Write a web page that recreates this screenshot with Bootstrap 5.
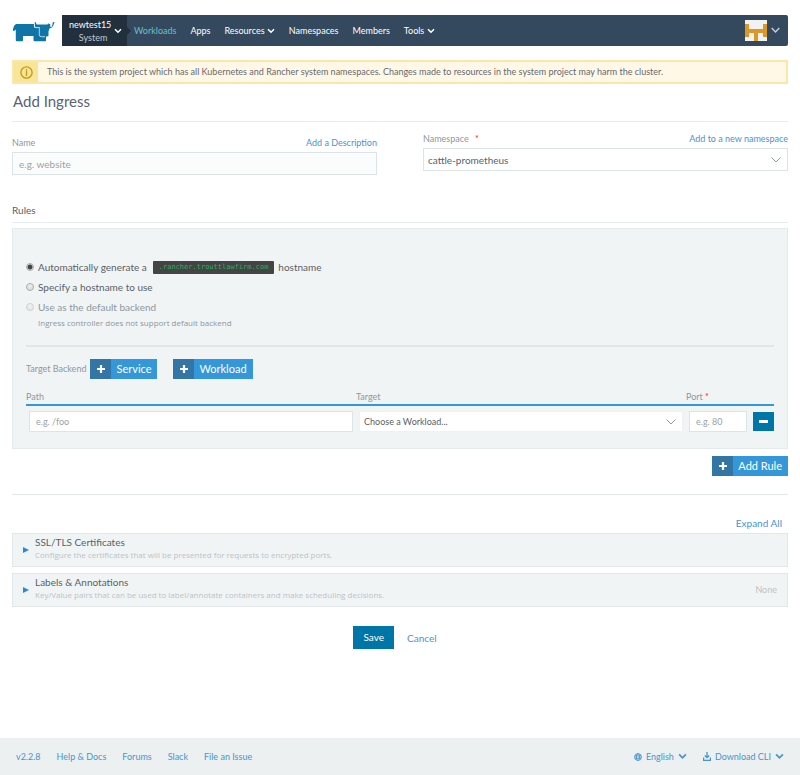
<!DOCTYPE html>
<html lang="en">
<head>
<meta charset="utf-8">
<meta name="viewport" content="width=device-width, initial-scale=1">
<title>Add Ingress</title>
<link href="https://cdn.jsdelivr.net/npm/bootstrap@5.3.0/dist/css/bootstrap.min.css" rel="stylesheet">
<style>
body{font-family:Lato,"Open Sans",sans-serif;font-size:9px;line-height:14px;color:#5a5f66;background:#fff}
a{color:#4a93d2;text-decoration:none}
.page-pad{padding-left:12px;padding-right:12px}
.top-row{padding-top:15px}
.logo{width:50px;height:31px;flex:none}
.top-bar{background:#34495e;border-radius:0 2px 2px 0;height:31px}
.project-btn{position:relative;background:#222f3c;color:#fff;width:65px;height:31px;border:0;padding:0 5px 0 7px;font-size:9px;line-height:13px}
.project-btn::after{content:"";position:absolute;left:100%;top:12px;border:4px solid transparent;border-left-color:#222f3c}
.project-btn .sub{color:#c3c9ce;padding-right:4px}
.top-nav{gap:14px;padding-left:7px}
.top-nav a{color:#fff}
.top-nav a.current{color:#63c2cf}
.alert-bar{margin-top:14px;border:2px solid #fbe7a8;background:#fff8e6;color:#666a70;border-radius:0;height:24px}
.alert-icon{width:24px;background:#f9e59a}
.alert-text{padding-left:9px}
.title-line{font-size:15px;line-height:20px;font-weight:400;color:#5a6370;margin:7px 0 0;padding:0 1px 10px;border-bottom:1px solid #e8eeef}
.lbl{color:#8f979e;font-size:9px;line-height:12px}
.lbl-row{margin-bottom:3px}
.lnk{font-size:9px;line-height:12px}
.req{color:#f22;font-size:9px}
.form-row{--bs-gutter-x:46px;margin-top:11px}
.form-control,.form-select{border:1px solid #dce5e6;border-radius:0;color:#5a5f66;font-size:10px;line-height:14px;padding:0 6px;box-shadow:none}
.form-control::placeholder{color:#9ba3a8}
.form-select{background:#fff url("data:image/svg+xml,%3Csvg xmlns='http://www.w3.org/2000/svg' viewBox='0 0 10 6'%3E%3Cpath d='M.5.5 5 5 9.5.5' fill='none' stroke='%23919aa2'/%3E%3C/svg%3E") no-repeat right 6px center/10px 6px;padding:0 22px 0 4px}
.tall{height:23px}
.name-box{background-color:#fbfdfd}
.sect{font-size:10px;line-height:16px;font-weight:400;margin:27px 0 0;padding-bottom:4px;border-bottom:1px solid #e8eeef}
.rule-box{background:#f0f4f5;border:1px solid #e5ebec;margin-top:5px;padding:28px 13px 16px}
.choice{min-height:20px;font-size:10px;line-height:20px}
.choice input{appearance:none;width:8px;height:8px;border:1px solid #aaa;border-radius:50%;margin:0 4px 0 0;background:linear-gradient(#eee,#ddd);flex:none}
.choice input:checked{background:radial-gradient(circle,#444 0 2px,#e9e9e9 3px)}
.choice input:disabled{opacity:.5}
.choice.off{color:#8e979d}
.host{font-family:"DejaVu Sans Mono",monospace;font-size:7px;line-height:13px;color:#27b060;background:#444;padding:0 6px;border-radius:1px;margin:0 4px 0 6px}
.help{color:#8e979d;font-family:"Open Sans",sans-serif;font-size:8px;line-height:12px;padding-left:12px}
.thin{border:0;border-top:2px solid #e1e7e8;opacity:1;margin:16px 0 12px}
.btn{border-radius:0;border:0}
.add-btn{background:#3497da;color:#fff;padding:0;font-size:11px;height:20px;line-height:20px}
.add-btn:hover{background:#2b86c5;color:#fff}
.add-btn .plus{width:21px;height:20px;background:#3376a6}
.add-btn .cap{padding:0 6px 0 5px}
.paths{table-layout:fixed;margin-top:12px;width:100%}
.paths th{font-weight:400;padding:0 0 1px;border-bottom:2px solid #3497da;line-height:12px}
.paths td{padding:5px 3px 0}
.paths .c-port{width:64px}.paths .c-del{width:24px}
.paths td:last-child{padding-right:0}
.paths .form-control,.paths .form-select{height:21px;font-size:9px;min-height:0}
.paths .form-select{border-color:#eef2f3}
.del-btn{background:#0075a8;width:21px;height:19px;padding:0}
.add-row{margin-top:7px}
.wide-line{border:0;border-top:1px solid #e2e8e9;opacity:1;margin:18px 0 21px}
.expand{padding-right:6px;margin-bottom:3px;font-size:10px}
.panels{gap:6px}
.panel-btn{background:#f0f4f5;border:1px solid #e2e8e9;width:100%;min-height:34px;padding:0 10px 4px 10px;gap:6px;text-align:left;color:#5a5f66}
.panel-btn .head{font-size:10px;line-height:14px}
.panel-btn .desc{font-family:"Open Sans",sans-serif;font-size:8px;line-height:12px;color:#bdc3c7}
.panel-btn .tri{margin-top:4px}
.panel-btn .none{color:#bdc3c7}
.actions{gap:13px;margin:19px 10px 16px 0;font-size:10px}
.save-btn{background:#0075a8;color:#fff;height:23px;padding:0 10px;font-size:10px;line-height:23px}
.foot{background:#ecf0f0;min-height:37px;padding:0 16px}
</style>
</head>
<body class="d-flex flex-column min-vh-100">
<svg class="d-none">
<symbol id="chev" viewBox="0 0 8 6"><path d="M1 1.200 4 4.200 7 1.200" fill="none" stroke="currentColor" stroke-width="1.600"/></symbol>
<symbol id="plus" viewBox="0 0 8 8"><path d="M4 0v8M0 4h8" stroke="currentColor" stroke-width="2.200"/></symbol>
</svg>
<header class="page-pad top-row d-flex">
<svg class="logo" viewBox="0 0 50 31" fill="#0f75a8" aria-label="Rancher"><path d="M.8 15.500C1.600 11.500 2.500 9 5 9H22V12.500H34.500Q36.500 12.500 36.500 14V20.500Q36.500 21.600 35 21.600H34V25.500Q34 26.300 33 26.300H22.500Q21.500 26.300 21.500 25.300V21H11V25.300Q11 26.300 10 26.300H4.800Q3.800 26.300 3.800 25.300V14.500L2 16Z"/><path d="M22.700 7.200Q23.600 6.600 24 8L24.600 9.600H34.500Q36.500 9.600 36.600 8.200L38.300 9.500V12L40 11.500 40.800 7.300 42.500 7Q41.500 12.500 37.500 13.500L36.500 16H28V12.500H24Q22.700 12 22.700 10.500Z"/><path d="M22.400 8.500V11Q22.400 12.600 24 12.600H27.300V19.600Q27.300 21.700 29.300 21.700H33" fill="none" stroke="#fff" stroke-width=".7"/></svg>
<nav class="top-bar d-flex align-items-center flex-grow-1" aria-label="Main">
<button class="project-btn d-flex align-items-center justify-content-between" type="button"><span class="text-end">newtest15<br><span class="sub">System</span></span><svg width="8" height="6"><use href="#chev"/></svg></button>
<div class="top-nav d-flex align-items-center">
<a class="current" href="#">Workloads</a><a href="#">Apps</a><a href="#">Resources <svg width="8" height="6"><use href="#chev"/></svg></a><a href="#">Namespaces</a><a href="#">Members</a><a href="#">Tools <svg width="8" height="6"><use href="#chev"/></svg></a>
</div>
<button class="btn ms-auto d-flex align-items-center p-0 pe-2 gap-1" type="button" aria-label="Account"><svg width="22" height="21" viewBox="0 0 22 21"><path fill="#f2f2f2" d="M0 0h22v21H0z"/><path fill="#db9728" d="M0 4h4v5h14V4h4v13h-4v-4h-5v8H9v-8H4v4H0z"/></svg><svg width="9" height="7" viewBox="0 0 9 7"><path d="M.7 1 4.500 5 8.300 1" fill="none" stroke="#c5ccd2" stroke-width="1.500"/></svg></button>
</nav>
</header>
<main class="page-pad">
<div class="alert-bar d-flex align-items-stretch" role="alert">
<span class="alert-icon d-flex align-items-center justify-content-center"><svg width="13" height="13" viewBox="0 0 13 13" fill="none" stroke="#c49d13" stroke-width="1.400"><circle cx="6.500" cy="6.500" r="5.600"/><path d="M6.500 3v1.400M6.500 5V10"/></svg></span>
<span class="alert-text align-self-center">This is the system project which has all Kubernetes and Rancher system namespaces. Changes made to resources in the system project may harm the cluster.</span>
</div>
<h1 class="title-line">Add Ingress</h1>
<form>
<div class="row form-row">
<div class="col-6 pt-1">
<div class="lbl-row d-flex justify-content-between"><label class="lbl" for="name">Name</label><a class="lnk" href="#">Add a Description</a></div>
<input class="form-control tall name-box" id="name" placeholder="e.g. website">
</div>
<div class="col-6">
<div class="lbl-row d-flex justify-content-between"><label class="lbl" for="ns">Namespace <span class="req ms-1">*</span></label><a class="lnk" href="#">Add to a new namespace</a></div>
<select class="form-select tall" id="ns"><option>cattle-prometheus</option></select>
</div>
</div>
<h2 class="sect">Rules</h2>
<section class="rule-box">
<div class="choice d-flex align-items-center"><input type="radio" name="host" id="h1" checked><label class="d-flex align-items-center" for="h1">Automatically generate a <code class="host">.rancher.trouttlawfirm.com</code> hostname</label></div>
<div class="choice d-flex align-items-center"><input type="radio" name="host" id="h2"><label for="h2">Specify a hostname to use</label></div>
<div class="choice off d-flex align-items-center"><input type="radio" name="host" id="h3" disabled><label for="h3">Use as the default backend</label></div>
<div class="help">Ingress controller does not support default backend</div>
<hr class="thin">
<div class="d-flex align-items-center">
<span class="lbl me-1">Target Backend</span>
<button class="btn add-btn d-flex me-3" type="button"><span class="plus d-flex align-items-center justify-content-center"><svg width="8" height="8"><use href="#plus"/></svg></span><span class="cap">Service</span></button>
<button class="btn add-btn d-flex" type="button"><span class="plus d-flex align-items-center justify-content-center"><svg width="8" height="8"><use href="#plus"/></svg></span><span class="cap">Workload</span></button>
</div>
<table class="paths">
<thead><tr><th class="lbl">Path</th><th class="lbl">Target</th><th class="lbl c-port">Port <span class="req">*</span></th><th class="c-del"></th></tr></thead>
<tbody><tr>
<td><input class="form-control" aria-label="Path" placeholder="e.g. /foo"></td>
<td><select class="form-select" aria-label="Target"><option>Choose a Workload...</option></select></td>
<td><input class="form-control" aria-label="Port" placeholder="e.g. 80"></td>
<td><button class="btn del-btn d-flex align-items-center justify-content-center" type="button" aria-label="Remove"><svg width="9" height="3"><path fill="#fff" d="M0 0h9v3H0z"/></svg></button></td>
</tr></tbody>
</table>
</section>
<div class="add-row d-flex justify-content-end"><button class="btn add-btn d-flex" type="button"><span class="plus d-flex align-items-center justify-content-center"><svg width="8" height="8"><use href="#plus"/></svg></span><span class="cap">Add Rule</span></button></div>
<hr class="wide-line">
<div class="expand text-end"><a href="#">Expand All</a></div>
<div class="panels d-flex flex-column">
<button class="panel-btn d-flex align-items-center" type="button"><svg class="tri" width="6" height="6"><path d="M0 0 6 3 0 6z" fill="#2b8ad6"/></svg><span><span class="head d-block">SSL/TLS Certificates</span><span class="desc d-block">Configure the certificates that will be presented for requests to encrypted ports.</span></span></button>
<button class="panel-btn d-flex align-items-center" type="button"><svg class="tri" width="6" height="6"><path d="M0 0 6 3 0 6z" fill="#2b8ad6"/></svg><span><span class="head d-block">Labels &amp; Annotations</span><span class="desc d-block">Key/Value pairs that can be used to label/annotate containers and make scheduling decisions.</span></span><span class="none ms-auto pt-1">None</span></button>
</div>
<div class="actions d-flex justify-content-center align-items-center"><button class="btn save-btn" type="submit">Save</button><a href="#">Cancel</a></div>
</form>
</main>
<footer class="foot mt-auto d-flex align-items-center justify-content-between">
<div class="d-flex gap-3"><a href="#">v2.2.8</a><a href="#">Help &amp; Docs</a><a href="#">Forums</a><a href="#">Slack</a><a href="#">File an Issue</a></div>
<div class="d-flex gap-3">
<a class="d-flex align-items-center gap-1" href="#"><svg width="8" height="8" viewBox="0 0 8 8" fill="none" stroke="currentColor" stroke-width=".8"><circle cx="4" cy="4" r="3.500"/><ellipse cx="4" cy="4" rx="1.600" ry="3.500"/><path d="M.5 4h7M1 2.300h6M1 5.700h6"/></svg>English<svg width="9" height="7"><use href="#chev"/></svg></a>
<a class="d-flex align-items-center gap-1" href="#"><svg width="8" height="9" viewBox="0 0 8 9" fill="none" stroke="currentColor" stroke-width="1.300"><path d="M4 0v5.500M1.800 3.500 4 5.700 6.200 3.500M.6 5.500v2.800h6.800V5.500"/></svg>Download CLI<svg width="9" height="7"><use href="#chev"/></svg></a>
</div>
</footer>
<script src="https://cdn.jsdelivr.net/npm/bootstrap@5.3.0/dist/js/bootstrap.bundle.min.js"></script>
</body>
</html>
